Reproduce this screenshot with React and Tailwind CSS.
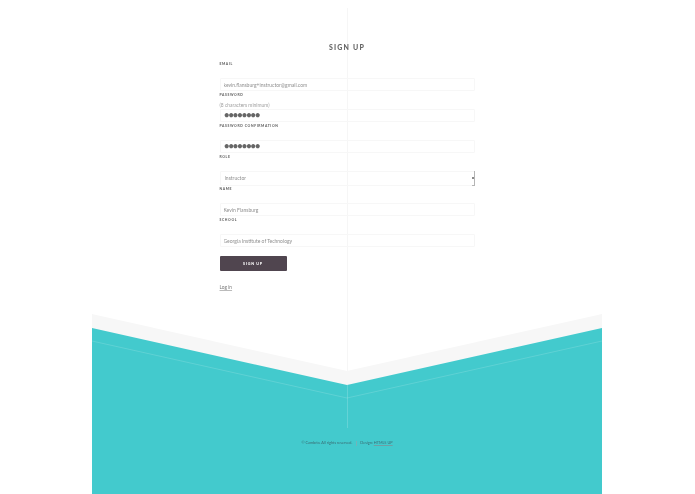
const FIELDS = [
  { label: 'EMAIL', value: 'kevin.flansburg+instructor@gmail.com', type: 'email' },
  { label: 'PASSWORD', hint: '(8 characters minimum)', value: 'password', type: 'password' },
  { label: 'PASSWORD CONFIRMATION', value: 'password', type: 'password' },
  { label: 'ROLE', value: 'Instructor', type: 'select' },
  { label: 'NAME', value: 'Kevin Flansburg', type: 'text' },
  { label: 'SCHOOL', value: 'Georgia Institute of Technology', type: 'text' },
]

function Field({ field }) {
  const box = 'block w-full rounded-[1px] border border-[#f7f7f7] bg-transparent text-[#8f8f8f] outline-none'
  return (
    <div>
      <label className="block h-[6px] text-[3.4px] leading-[7px] font-black tracking-[0.6px] text-[#666666]">{field.label}</label>
      <div className="h-[11px] pt-[3px] text-[4.9px] leading-[8px] text-[#a0a0a0]">{field.hint}</div>
      {field.type === 'select' ? (
        <div className="relative">
          <select defaultValue={field.value} className={`${box} h-[15px] appearance-none pl-[4px] text-[5px]`}>
            <option>Instructor</option>
          </select>
          <span className="absolute top-0 right-0 h-[15px] w-px bg-[#b5b5b5]" />
          <span className="absolute top-[6px] right-[1px] h-[2px] w-[2px] bg-[#8a8a8a]" />
          <span className="absolute right-0 bottom-0 h-px w-[3px] bg-[#b5b5b5]" />
        </div>
      ) : (
        <input
          readOnly
          type={field.type}
          defaultValue={field.value}
          className={`${box} mb-px h-[13px] px-[3px] ${field.type === 'password' ? 'text-[11px] tracking-[-1.95px] text-[#666666]' : 'text-[5px]'}`}
        />
      )}
    </div>
  )
}

function FooterShape() {
  return (
    <svg className="absolute inset-0 h-full w-full" viewBox="0 0 510 180" fill="none">
      <polygon points="0,0 255,57 510,0 510,180 0,180" fill="#f7f7f7" />
      <polygon points="0,14 255,71 510,14 510,180 0,180" fill="#43cacd" />
      <polyline points="0,27 255,84 510,27" stroke="#ffffff" strokeOpacity="0.25" strokeWidth="0.6" />
      <line x1="255.5" y1="71" x2="255.5" y2="114" stroke="#ffffff" strokeOpacity="0.18" strokeWidth="1" />
    </svg>
  )
}

export default function App() {
  return (
    <div className="relative h-[494px] overflow-hidden bg-white pr-px font-['Lato',sans-serif] will-change-transform">
      <div className="absolute top-[8px] left-[347px] h-[363px] w-px bg-[#f6f6f6]" />

      <main className="relative mx-auto h-[314px] w-[255px] pt-[42px]">
        <h1 className="mb-[9px] h-[10px] text-center text-[7px] leading-[10px] font-black tracking-[1.2px] text-[#666666]">SIGN UP</h1>
        <form>
          {FIELDS.map((field) => (
            <Field key={field.label} field={field} />
          ))}
          <button type="button" className="mt-[9px] block h-[15px] w-[67px] rounded-[1px] bg-[#50454f] text-[3.7px] font-black tracking-[0.75px] text-white">
            SIGN UP
          </button>
        </form>
        <a className="mt-[9px] inline-block text-[4.8px] leading-[8px] text-[#777777] underline decoration-[#bbbbbb]">Log in</a>
      </main>

      <footer className="relative mx-auto h-[180px] w-[510px]">
        <FooterShape />
        <div className="relative flex items-center justify-center gap-[2.5px] pt-[126px] text-[3.8px] leading-[6px] text-[#3a6a72]">
          <span>© Cambrio. All rights reserved.</span>
          <span className="mx-[1px] h-[5px] w-px bg-[#74b3b8]" />
          <span>
            Design: <a className="underline decoration-[#6f9ea3]">HTML5 UP</a>
          </span>
        </div>
      </footer>
    </div>
  )
}
